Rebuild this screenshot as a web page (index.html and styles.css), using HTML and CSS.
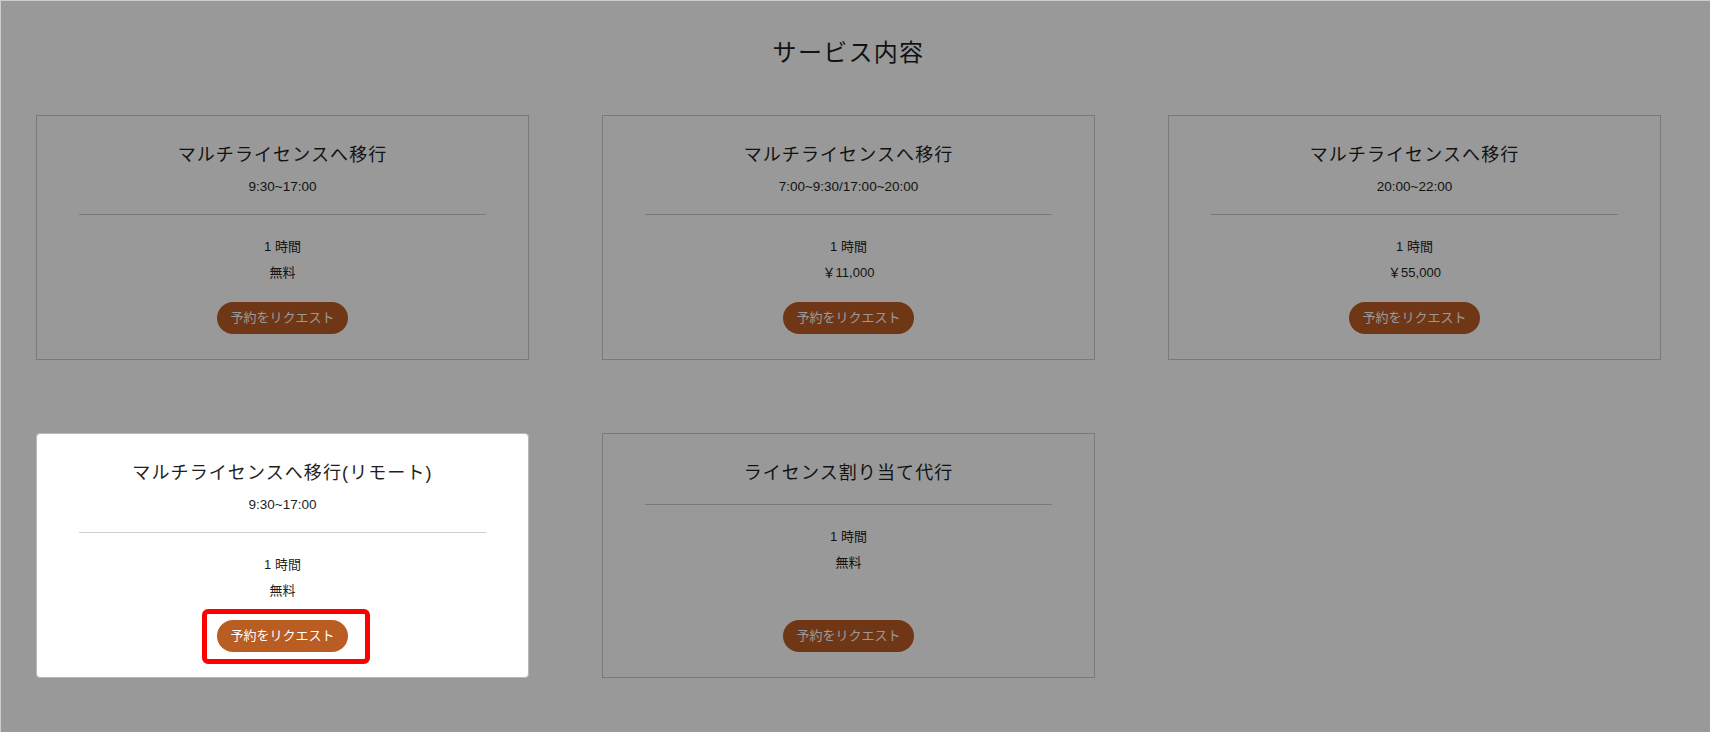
FILE: index.html
```html
<!DOCTYPE html>
<html lang="ja">
<head>
<meta charset="utf-8">
<title>サービス内容</title>
<link rel="stylesheet" href="styles.css">
</head>
<body>
<div class="edge"></div>
<main class="page">
  <h1 class="page-title">サービス内容</h1>
  <div class="grid">
    <section class="card">
      <h2 class="card-title">マルチライセンスへ移行</h2>
      <p class="card-time">9:30~17:00</p>
      <hr class="divider">
      <div class="details">
        <p>1 時間</p>
        <p>無料</p>
      </div>
      <div class="action"><span class="btn">予約をリクエスト</span></div>
    </section>
    <section class="card">
      <h2 class="card-title">マルチライセンスへ移行</h2>
      <p class="card-time">7:00~9:30/17:00~20:00</p>
      <hr class="divider">
      <div class="details">
        <p>1 時間</p>
        <p>￥11,000</p>
      </div>
      <div class="action"><span class="btn">予約をリクエスト</span></div>
    </section>
    <section class="card">
      <h2 class="card-title">マルチライセンスへ移行</h2>
      <p class="card-time">20:00~22:00</p>
      <hr class="divider">
      <div class="details">
        <p>1 時間</p>
        <p>￥55,000</p>
      </div>
      <div class="action"><span class="btn">予約をリクエスト</span></div>
    </section>
    <section class="card card-focus">
      <h2 class="card-title">マルチライセンスへ移行(リモート)</h2>
      <p class="card-time">9:30~17:00</p>
      <hr class="divider">
      <div class="details">
        <p>1 時間</p>
        <p>無料</p>
      </div>
      <div class="action"><span class="btn btn-marked">予約をリクエスト</span></div>
    </section>
    <section class="card">
      <h2 class="card-title">ライセンス割り当て代行</h2>
      <hr class="divider">
      <div class="details">
        <p>1 時間</p>
        <p>無料</p>
      </div>
      <div class="action"><span class="btn">予約をリクエスト</span></div>
    </section>
  </div>
</main>
</body>
</html>
```

FILE: styles.css
```css
html, body {
  margin: 0;
  padding: 0;
  background: #ffffff;
}

body {
  font-family: "Liberation Sans", "Noto Sans CJK JP", sans-serif;
  color: #1e1e1e;
  height: 732px;
  overflow: hidden;
}

.edge {
  position: fixed;
  top: 0;
  left: 0;
  right: 0;
  bottom: 0;
  border-top: 1px solid rgba(255, 255, 255, 0.5);
  border-left: 1px solid rgba(255, 255, 255, 0.5);
  z-index: 5;
  pointer-events: none;
}

.page {
  padding: 35px 49px 0 36px;
}

.page-title {
  margin: 0 0 44px;
  font-size: 24px;
  line-height: 36px;
  font-weight: 400;
  letter-spacing: 1.3px;
  text-align: center;
}

.grid {
  display: grid;
  grid-template-columns: repeat(3, 1fr);
  column-gap: 73px;
  row-gap: 73px;
}

.card {
  display: flex;
  flex-direction: column;
  align-items: stretch;
  padding: 26px 42px 25px;
  border: 1px solid #cccccc;
  background: #ffffff;
  text-align: center;
}

.card-focus {
  position: relative;
  z-index: 2;
  border-color: #b8b8b8;
  border-radius: 4px;
  box-shadow: 0 0 0 4000px rgba(0, 0, 0, 0.4);
}

.card-title {
  margin: 0;
  font-size: 18px;
  line-height: 27px;
  font-weight: 400;
  letter-spacing: 1.1px;
}

.card-time {
  margin: 7px 0 0;
  font-size: 13.5px;
  line-height: 21px;
}

.divider {
  margin: 17px 0 0;
  border: 0;
  height: 1px;
  background: #cccccc;
}

.details {
  margin-top: 19px;
}

.details p {
  margin: 0;
  font-size: 13px;
  line-height: 26px;
}

.action {
  margin-top: auto;
  padding-top: 16px;
  display: flex;
  justify-content: center;
}

.btn {
  position: relative;
  box-sizing: border-box;
  display: inline-flex;
  align-items: center;
  height: 32px;
  padding: 0 13px 4px;
  border-radius: 16px;
  background: #b95d23;
  color: #ffffff;
  font-size: 13px;
  white-space: nowrap;
}

.btn-marked::after {
  content: "";
  position: absolute;
  top: -11px;
  left: -15px;
  right: -22px;
  bottom: -12px;
  border: 5px solid #ff0000;
  border-radius: 6px;
}
```
